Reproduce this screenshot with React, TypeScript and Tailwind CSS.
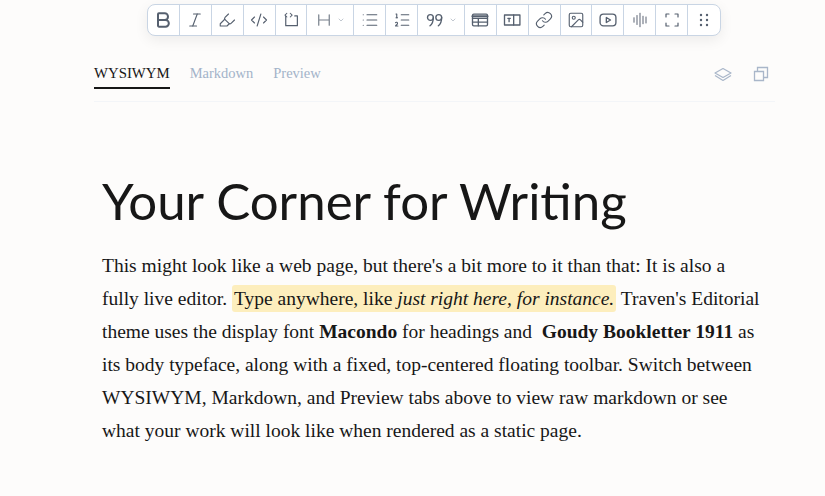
import {
  Bold,
  ChevronDown,
  CodeXml,
  Highlighter,
  Image,
  Italic,
  Link,
  List,
  ListOrdered,
} from "lucide-react";
import type { ReactNode } from "react";

const serif = "font-['Liberation_Serif',serif]";

function Svg({ children, className = "" }: { children: ReactNode; className?: string }) {
  return (
    <svg
      viewBox="0 0 24 24"
      fill="none"
      stroke="currentColor"
      strokeWidth={1.6}
      strokeLinecap="round"
      strokeLinejoin="round"
      className={`size-[18px] ${className}`}
    >
      {children}
    </svg>
  );
}

function ToolButton({ children, wide, last }: { children: ReactNode; wide?: boolean; last?: boolean }) {
  return (
    <div
      className={`flex h-full items-center justify-center ${wide ? "w-[47px] gap-1" : "w-[32px]"} ${
        last ? "" : "border-r border-[#c9d5e4]"
      }`}
    >
      {children}
    </div>
  );
}

function Toolbar() {
  const icon = "size-[18px]";
  return (
    <div className="flex h-[32px] w-[574px] items-center rounded-lg border border-[#c9d5e4] bg-white text-[#56606f] shadow-[0_4px_14px_rgba(0,0,0,0.07)]">
      <ToolButton>
        <Bold className="size-[20px]" strokeWidth={2.4} />
      </ToolButton>
      <ToolButton>
        <Italic className={icon} strokeWidth={1.5} />
      </ToolButton>
      <ToolButton>
        <Highlighter className={icon} strokeWidth={1.5} />
      </ToolButton>
      <ToolButton>
        <CodeXml className={icon} strokeWidth={1.5} />
      </ToolButton>
      <ToolButton>
        <Svg>
          <path d="M5 7v12.500h15.500V6.500H17" />
          <path d="m6.500 3-2.500 2.500L6.500 8M11 3l2.500 2.500L11 8" strokeWidth={1.4} />
        </Svg>
      </ToolButton>
      <ToolButton wide>
        <Svg className="opacity-80">
          <path d="M5 5v14M19 5v14M5 12h14" />
        </Svg>
        <ChevronDown className="size-2 text-[#c2c8d0]" strokeWidth={3} />
      </ToolButton>
      <ToolButton>
        <List className={icon} strokeWidth={1.5} />
      </ToolButton>
      <ToolButton>
        <ListOrdered className={icon} strokeWidth={1.5} />
      </ToolButton>
      <ToolButton wide>
        <Svg className="size-[20px]">
          <circle cx="6.500" cy="9" r="3.500" />
          <path d="M10 9c0 5-1.500 8-4 10" />
          <circle cx="16.500" cy="9" r="3.500" />
          <path d="M20 9c0 5-1.500 8-4 10" />
        </Svg>
        <ChevronDown className="size-2 text-[#c2c8d0]" strokeWidth={3} />
      </ToolButton>
      <ToolButton>
        <Svg className="size-[20px]">
          <rect x="3" y="5" width="18" height="14" rx="1.500" />
          <path d="M3 10h18M3 14.500h18M10 10v9" />
          <path d="M3 7.500h18" strokeWidth={2.500} />
        </Svg>
      </ToolButton>
      <ToolButton>
        <Svg className="size-[20px]">
          <path d="M14 6H3v12h11V6Z" />
          <path d="M14 6h7.500M14 18h7.500M21.500 6v12" />
          <path d="M7 10h3M8.500 10v4" />
        </Svg>
      </ToolButton>
      <ToolButton>
        <Link className={icon} strokeWidth={1.5} />
      </ToolButton>
      <ToolButton>
        <Image className={icon} strokeWidth={1.5} />
      </ToolButton>
      <ToolButton>
        <Svg className="size-[20px]">
          <rect x="2.500" y="5" width="19" height="14" rx="4" />
          <path d="M10 9v6l5-3-5-3Z" />
        </Svg>
      </ToolButton>
      <ToolButton>
        <Svg>
          <path d="M4 9v6M8 6v12M12 3v18M16 7v10M20 8v8" strokeWidth={1.300} />
        </Svg>
      </ToolButton>
      <ToolButton>
        <Svg>
          <path d="M4 8V4h4M16 4h4v4M20 16v4h-4M8 20H4v-4" />
        </Svg>
      </ToolButton>
      <ToolButton last>
        <svg viewBox="0 0 18 18" fill="currentColor" className={icon}>
          <circle cx="6" cy="4" r="1.200" />
          <circle cx="12" cy="4" r="1.200" />
          <circle cx="6" cy="9" r="1.200" />
          <circle cx="12" cy="9" r="1.200" />
          <circle cx="6" cy="14" r="1.200" />
          <circle cx="12" cy="14" r="1.200" />
        </svg>
      </ToolButton>
    </div>
  );
}

export default function App() {
  return (
    <div className={`min-h-[496px] overflow-hidden bg-[#fdfcfb] text-[#171717] ${serif}`}>
      <div className="ml-[147px] pt-1">
        <Toolbar />
      </div>

      <div className="ml-[94px] mt-[25px] flex h-[41px] w-[681px] items-start justify-between border-b border-[#f3f5f8]">
        <div className="flex gap-5 text-[14.500px] leading-[25px]">
          <div className="h-[28px] border-b-2 border-[#171717] text-[14.800px]">WYSIWYM</div>
          <div className="text-[#a3b3c9]">Markdown</div>
          <div className="text-[#a3b3c9]">Preview</div>
        </div>
        <div className="mr-[5px] mt-[4px] flex gap-5 text-[#a9b6c9]">
          <svg viewBox="0 0 18 18" fill="none" stroke="currentColor" strokeWidth={1.2} strokeLinejoin="round" className="size-[18px]">
            <path d="m9 3.500 8 4.500-8 4.500L1 8l8-4.500Z" />
            <path d="m1 10.500 8 5 8-5" />
          </svg>
          <svg viewBox="0 0 18 18" fill="none" stroke="currentColor" strokeWidth={1.300} className="size-[18px]">
            <path d="M2.500 6.500h9v9h-9z" />
            <path d="M5.500 6.500v-4h10v10h-4" />
          </svg>
        </div>
      </div>

      <h1 className="ml-[102px] mt-[66px] font-['Lato',sans-serif] text-[51px] leading-[66px]">
        Your Corner for Writing
      </h1>

      <p className="ml-[102px] mt-[15px] whitespace-nowrap text-[19.500px] leading-[33px]">
        This might look like a web page, but there's a bit more to it than that: It is also a
        <br />
        fully live editor.{" "}
        <mark className="rounded-[3px] bg-[#fdeebd] px-0.5 py-[3px] text-inherit">
          Type anywhere, like <em>just right here, for instance.</em>
        </mark>{" "}
        Traven's Editorial
        <br />
        theme uses the display font <strong>Macondo</strong> for headings and{" "}
        <strong>&nbsp;Goudy Bookletter 1911</strong> as
        <br />
        its body typeface, along with a fixed, top-centered floating toolbar. Switch between
        <br />
        WYSIWYM, Markdown, and Preview tabs above to view raw markdown or see
        <br />
        what your work will look like when rendered as a static page.
      </p>
    </div>
  );
}
